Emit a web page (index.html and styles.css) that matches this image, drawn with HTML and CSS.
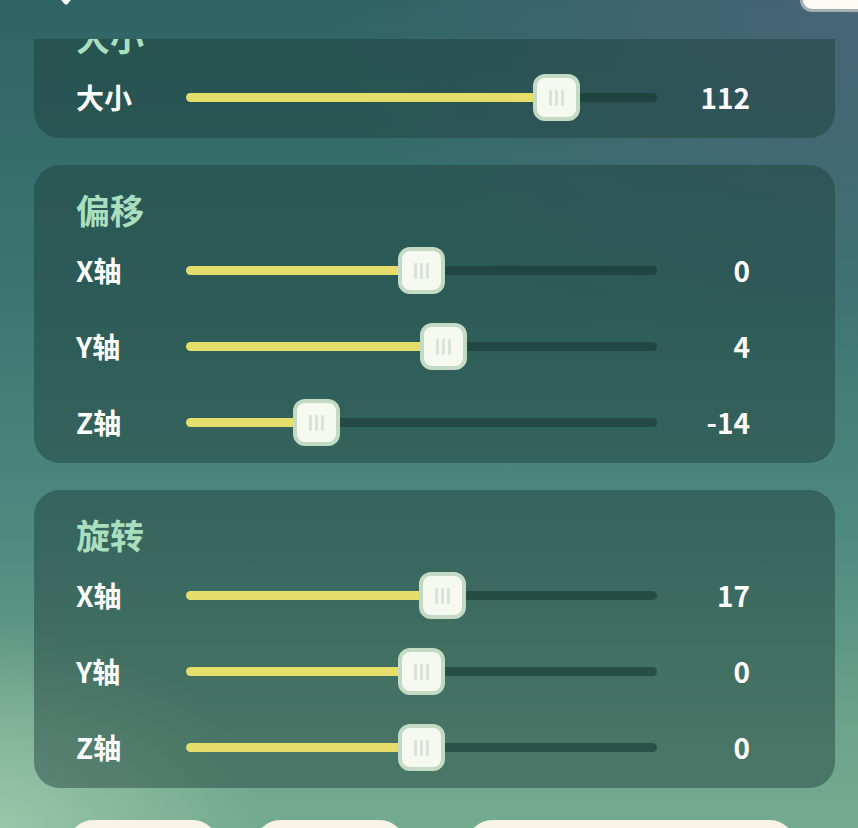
FILE: index.html
```html
<!DOCTYPE html>
<html lang="zh">
  <head>
    <meta charset="UTF-8" />
    <meta name="viewport" content="width=device-width, initial-scale=1.0" />
    <title>Transform</title>
    <link rel="stylesheet" href="styles.css">
  </head>
  <body>
    <div class="screen">
      <header class="top-bar">
        <svg class="back-icon" width="24" height="14" viewBox="0 0 24 14">
          <polyline points="4,-8 12,2 20,-8" fill="none" stroke="#ffffff" stroke-width="5" stroke-linecap="round" stroke-linejoin="round" />
        </svg>
        <div class="top-button"></div>
      </header>

      <main class="panel-scroll">
        <div class="panel-content">
          <section class="card">
            <h2 class="card-title">大小</h2>
            <div class="row">
              <span class="row-label">大小</span>
              <div class="slider">
                <div class="slider-fill" style="width: 78.6%"></div>
                <div class="slider-thumb" style="left: 78.6%"><i></i><i></i><i></i></div>
              </div>
              <span class="row-value">112</span>
            </div>
          </section>

          <section class="card">
            <h2 class="card-title">偏移</h2>
            <div class="row">
              <span class="row-label">X轴</span>
              <div class="slider">
                <div class="slider-fill" style="width: 49.9%"></div>
                <div class="slider-thumb" style="left: 49.9%"><i></i><i></i><i></i></div>
              </div>
              <span class="row-value">0</span>
            </div>
            <div class="row">
              <span class="row-label">Y轴</span>
              <div class="slider">
                <div class="slider-fill" style="width: 54.6%"></div>
                <div class="slider-thumb" style="left: 54.6%"><i></i><i></i><i></i></div>
              </div>
              <span class="row-value">4</span>
            </div>
            <div class="row">
              <span class="row-label">Z轴</span>
              <div class="slider">
                <div class="slider-fill" style="width: 27.6%"></div>
                <div class="slider-thumb" style="left: 27.6%"><i></i><i></i><i></i></div>
              </div>
              <span class="row-value">-14</span>
            </div>
          </section>

          <section class="card">
            <h2 class="card-title">旋转</h2>
            <div class="row">
              <span class="row-label">X轴</span>
              <div class="slider">
                <div class="slider-fill" style="width: 54.4%"></div>
                <div class="slider-thumb" style="left: 54.4%"><i></i><i></i><i></i></div>
              </div>
              <span class="row-value">17</span>
            </div>
            <div class="row">
              <span class="row-label">Y轴</span>
              <div class="slider">
                <div class="slider-fill" style="width: 49.9%"></div>
                <div class="slider-thumb" style="left: 49.9%"><i></i><i></i><i></i></div>
              </div>
              <span class="row-value">0</span>
            </div>
            <div class="row">
              <span class="row-label">Z轴</span>
              <div class="slider">
                <div class="slider-fill" style="width: 49.9%"></div>
                <div class="slider-thumb" style="left: 49.9%"><i></i><i></i><i></i></div>
              </div>
              <span class="row-value">0</span>
            </div>
          </section>
        </div>
      </main>

      <footer class="bottom-bar">
        <button class="pill-btn pill-small"></button>
        <button class="pill-btn pill-small"></button>
        <button class="pill-btn pill-wide"></button>
      </footer>
    </div>
  </body>
</html>
```

FILE: styles.css
```css
* {
  box-sizing: border-box;
  margin: 0;
  padding: 0;
}

html,
body {
  width: 858px;
  height: 828px;
  overflow: hidden;
}

body {
  font-family: "Noto Sans CJK SC", "Noto Sans", sans-serif;
  color: #ffffff;
  background:
    radial-gradient(ellipse 260px 200px at 0% 100%, rgba(170, 210, 180, 0.7), rgba(170, 210, 180, 0) 100%),
    radial-gradient(ellipse 520px 380px at 100% 0%, rgba(84, 100, 125, 0.7), rgba(84, 100, 125, 0) 100%),
    linear-gradient(180deg, #2f6465 0%, #3b7571 35%, #4f8a7e 65%, #6ea58c 90%, #74aa90 100%);
}

.screen {
  display: flex;
  flex-direction: column;
  height: 828px;
}

.top-bar {
  height: 39px;
  flex-shrink: 0;
  display: flex;
  justify-content: space-between;
  align-items: flex-start;
  padding-left: 54px;
}

.back-icon {
  display: block;
}

.top-button {
  width: 58px;
  height: 12px;
  background: #fbfaf4;
  border-bottom: 3px solid #a3b0b2;
  border-left: 3px solid #a3b0b2;
  border-radius: 0 0 0 20px;
}

.panel-scroll {
  height: 767px;
  flex-shrink: 0;
  overflow: hidden;
}

.panel-content {
  margin-top: -47px;
  padding: 0 23px 0 34px;
  display: flex;
  flex-direction: column;
  gap: 27px;
}

.card {
  background: rgba(28, 62, 56, 0.46);
  border-radius: 26px;
  padding: 25px 85px 18px 42px;
}

.card-title {
  font-size: 34px;
  line-height: 40px;
  font-weight: 700;
  color: #a9dfbf;
  margin-bottom: 17px;
}

.row {
  display: grid;
  grid-template-columns: 110px 471px 1fr;
  align-items: center;
  height: 46px;
}

.row + .row {
  margin-top: 30px;
}

.row-label,
.row-value {
  font-size: 28px;
  font-weight: 700;
  line-height: 46px;
}

.row-value {
  text-align: right;
}

.slider {
  position: relative;
  height: 9px;
  border-radius: 5px;
  background: rgba(24, 56, 50, 0.6);
}

.slider-fill {
  height: 100%;
  border-radius: 5px;
  background: #e6de6b;
}

.slider-thumb {
  position: absolute;
  top: 50%;
  width: 47px;
  height: 47px;
  margin: -23px 0 0 -23px;
  background: #f6f9f0;
  border: 4px solid #c3dac5;
  border-radius: 12px;
  display: flex;
  justify-content: center;
  align-items: center;
  gap: 3px;
}

.slider-thumb i {
  display: block;
  width: 3px;
  height: 16px;
  background: #d9e4d8;
  border-radius: 1px;
}

.bottom-bar {
  display: flex;
  gap: 37px;
  padding: 14px 0 0 68px;
}

.pill-btn {
  height: 50px;
  border: none;
  border-radius: 26px;
  background: #f7f3e7;
}

.pill-small {
  width: 150px;
}

.pill-wide {
  width: 328px;
  margin-left: 25px;
}
```
